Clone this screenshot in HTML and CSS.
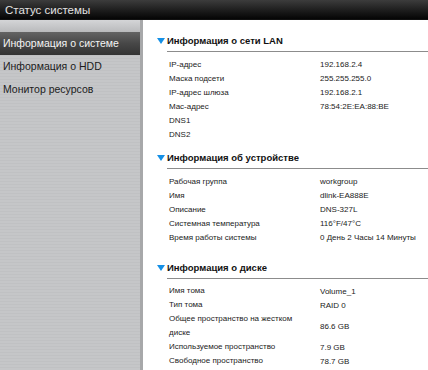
FILE: index.html
```html
<!DOCTYPE html>
<html lang="ru">
<head>
<meta charset="utf-8">
<title>Статус системы</title>
<link rel="stylesheet" href="styles.css">
</head>
<body>
<div class="topbar">Статус системы</div>
<div class="layout">
  <nav class="sidebar">
    <div class="side-top"></div>
    <div class="nav-item active">Информация о системе</div>
    <div class="nav-item">Информация о HDD</div>
    <div class="nav-item">Монитор ресурсов</div>
  </nav>
  <main class="main">
    <section class="sec sec-lan">
      <div class="sec-head"><span class="tri"></span><span class="sec-title">Информация о сети LAN</span></div>
      <div class="rows">
        <div class="row"><span class="lbl">IP-адрес</span><span class="val">192.168.2.4</span></div>
        <div class="row"><span class="lbl">Маска подсети</span><span class="val">255.255.255.0</span></div>
        <div class="row"><span class="lbl">IP-адрес шлюза</span><span class="val">192.168.2.1</span></div>
        <div class="row"><span class="lbl">Mac-адрес</span><span class="val">78:54:2E:EA:88:BE</span></div>
        <div class="row"><span class="lbl">DNS1</span><span class="val"></span></div>
        <div class="row"><span class="lbl">DNS2</span><span class="val"></span></div>
      </div>
    </section>
    <section class="sec sec-dev">
      <div class="sec-head"><span class="tri"></span><span class="sec-title">Информация об устройстве</span></div>
      <div class="rows">
        <div class="row"><span class="lbl">Рабочая группа</span><span class="val">workgroup</span></div>
        <div class="row"><span class="lbl">Имя</span><span class="val">dlink-EA888E</span></div>
        <div class="row"><span class="lbl">Описание</span><span class="val">DNS-327L</span></div>
        <div class="row"><span class="lbl">Системная температура</span><span class="val">116°F/47°C</span></div>
        <div class="row"><span class="lbl">Время работы системы</span><span class="val">0 День 2 Часы 14 Минуты</span></div>
      </div>
    </section>
    <section class="sec sec-disk">
      <div class="sec-head"><span class="tri"></span><span class="sec-title">Информация о диске</span></div>
      <div class="rows">
        <div class="row"><span class="lbl">Имя тома</span><span class="val">Volume_1</span></div>
        <div class="row"><span class="lbl">Тип тома</span><span class="val">RAID 0</span></div>
        <div class="row"><span class="lbl">Общее пространство на жестком диске</span><span class="val">86.6 GB</span></div>
        <div class="row"><span class="lbl">Используемое пространство</span><span class="val">7.9 GB</span></div>
        <div class="row"><span class="lbl">Свободное пространство</span><span class="val">78.7 GB</span></div>
      </div>
    </section>
  </main>
</div>
</body>
</html>
```
FILE: styles.css
```css
html, body {
  margin: 0;
  padding: 0;
  background: #ffffff;
  overflow: hidden;
}
body {
  width: 428px;
  height: 370px;
  font-family: "Liberation Sans", Arial, sans-serif;
}
.topbar {
  height: 20px;
  box-sizing: border-box;
  padding-left: 5px;
  line-height: 20px;
  font-size: 11.5px;
  color: #e2e2e2;
  background: linear-gradient(#3c3c3c, #1a1a1a 60%, #050505);
  border-bottom: 1px solid #111;
}
.layout {
  display: flex;
  height: 350px;
}
.sidebar {
  width: 140px;
  flex: none;
  border-right: 3px solid #a7a8aa;
  background: repeating-linear-gradient(#c5c6c8 0, #c5c6c8 2px, #c0c1c3 2px, #c0c1c3 3px);
}
.side-top {
  height: 12px;
  background: linear-gradient(#d4d5d7, #b9babc);
}
.nav-item {
  height: 23px;
  line-height: 23px;
  padding-left: 3px;
  font-size: 10.5px;
  color: #1c1c1c;
  white-space: nowrap;
}
.nav-item.active {
  color: #f4f4f4;
  background: linear-gradient(#646464, #474747 50%, #343434);
}
.main {
  flex: 1;
  padding-top: 14px;
  min-width: 0;
}
.sec-lan {
  margin-bottom: 10px;
}
.sec-dev {
  margin-bottom: 17px;
}
.sec-head {
  display: flex;
  align-items: flex-start;
  padding-left: 14px;
}
.tri {
  width: 0;
  height: 0;
  margin-top: 4px;
  margin-right: 2px;
  border-left: 4px solid transparent;
  border-right: 4px solid transparent;
  border-top: 6px solid #1590e6;
}
.sec-title {
  flex: 1;
  font-size: 9.5px;
  font-weight: bold;
  color: #111;
  line-height: 14px;
  padding-bottom: 3px;
  border-bottom: 1px solid #8c8c8c;
}
.rows {
  padding-top: 5px;
  padding-left: 26px;
}
.row {
  display: flex;
  align-items: center;
  min-height: 14px;
  font-size: 8px;
  color: #222;
}
.lbl {
  width: 151px;
  flex: none;
  line-height: 13px;
  padding-right: 18px;
  box-sizing: border-box;
}
.sec-disk .lbl {
  line-height: 14px;
}
.val {
  line-height: 13px;
}
```
